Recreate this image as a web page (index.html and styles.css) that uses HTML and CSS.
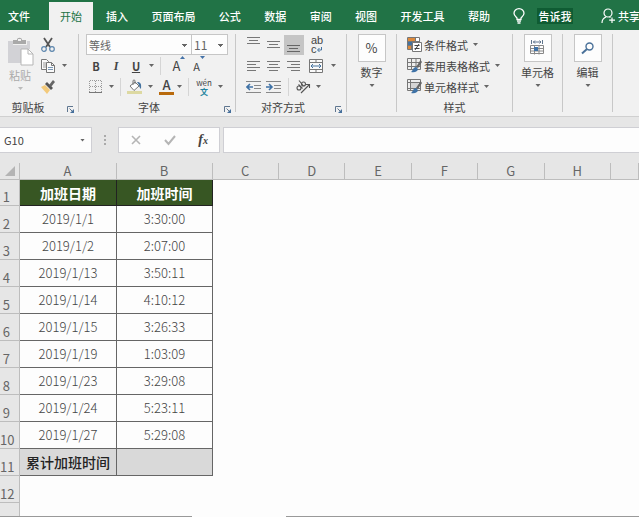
FILE: index.html
```html
<!DOCTYPE html>
<html lang="zh-CN">
<head>
    <meta charset="UTF-8">
    <meta name="viewport" content="width=device-width, initial-scale=1.0">
    <title>加班时间</title>
    <link rel="stylesheet" href="styles.css">
</head>
<body>

    <header class="tab-bar">
        <button class="tab file">文件</button>
        <button class="tab active">开始</button>
        <nav class="tabs">
            <button class="tab">插入</button>
            <button class="tab">页面布局</button>
            <button class="tab">公式</button>
            <button class="tab">数据</button>
            <button class="tab">审阅</button>
            <button class="tab">视图</button>
            <button class="tab">开发工具</button>
            <button class="tab">帮助</button>
        </nav>
        <svg class="bulb" width="12" height="16" viewBox="0 0 12 16" fill="none" stroke="#fff" stroke-width="1.3">
            <path d="M4 11.5V10C2.500 8.500 1 7.500 1 5.300a5 4.600 0 0 1 10 0C11 7.500 9.500 8.500 8 10v1.500zM4 13.200h4M4.500 15h3"/>
        </svg>
        <button class="tell-me">告诉我</button>
        <button class="share">
            <svg width="14" height="16" viewBox="0 0 14 16" fill="none" stroke="#fff" stroke-width="1.200">
                <circle cx="7" cy="5" r="4"/>
                <path d="M1 15c0-3 1.500-5 4-6M8.500 9l1 .6M11 9.500v5.500M8.200 12.200H14"/>
            </svg>
            共享
        </button>
    </header>

    <section class="ribbon">
        <div class="group clipboard">
            <div class="group-body">
                <button class="paste" disabled>
                    <svg width="27" height="30" viewBox="0 0 27 30">
                        <path d="M1 4h5v4h14V4h3v8h-9v14H1z" fill="#d2d2d6"/>
                        <path d="M6 3h4c0-3 5-3 5 0h4v4H6z" fill="#a9a9a9"/>
                        <rect x="11" y="2" width="3" height="2" fill="#f1f1f1"/>
                        <path d="M14 12h7l5 5v11H14z" fill="#fff" stroke="#b5b5b5"/>
                        <path d="M21 12v5h5" fill="none" stroke="#b5b5b5"/>
                    </svg>
                    <span>粘贴</span>
                    <i class="caret"></i>
                </button>
                <div class="tools">
                    <button class="row" aria-label="剪切">
                        <svg width="16" height="16" viewBox="0 0 16 16" fill="none">
                            <path d="M4 1l6 9M12 1L6 10" stroke="#555" stroke-width="1.800"/>
                            <circle cx="4" cy="12" r="2.300" stroke="#5c86ad" stroke-width="1.200"/>
                            <circle cx="12" cy="12" r="2.300" stroke="#5c86ad" stroke-width="1.200"/>
                        </svg>
                    </button>
                    <button class="row" aria-label="复制">
                        <svg width="16" height="16" viewBox="0 0 16 16" fill="#fafafa" stroke="#777">
                            <path d="M1.500 1.500h5l2 2v8h-7z"/>
                            <path d="M3 5h3M3 7h3M3 9h3" stroke="#999"/>
                            <path d="M6.500 4.500h5l3 3v7h-8z"/>
                            <path d="M11.500 4.500v3h3" fill="none"/>
                            <path d="M8 9.500h5M8 11.500h5" stroke="#7896b5"/>
                        </svg>
                        <i class="caret"></i>
                    </button>
                    <button class="row" aria-label="格式刷">
                        <svg width="16" height="16" viewBox="0 0 16 16">
                            <path d="M1 8l4-2 5 5-3 4z" fill="#f3ca7b"/>
                            <path d="M5 5l2-2 6 6-2 2z" fill="#555"/>
                            <path d="M9 6l4-5 2 2-4 5z" fill="#666"/>
                        </svg>
                    </button>
                </div>
            </div>
            <footer class="group-name">剪贴板
                <svg class="launcher" width="7" height="7" viewBox="0 0 7 7"><path d="M.5 6V.5H6M2.500 2.500l3 3" fill="none" stroke="#5f7690"/><path d="M7 3v4H3z" fill="#456f9b"/></svg>
            </footer>
        </div>

        <div class="group font">
            <div class="group-body stacked">
                <div class="row selects">
                    <select class="font-name" aria-label="字体"><option>等线</option></select>
                    <select class="font-size" aria-label="字号"><option>11</option></select>
                </div>
                <div class="row">
                    <button class="icon bold">B</button>
                    <button class="icon italic">I</button>
                    <button class="icon underline">U</button>
                    <i class="caret"></i>
                    <span class="divider"></span>
                    <button class="icon grow">A<svg width="5" height="3" viewBox="0 0 5 3"><path d="M0 3l2.500-3L5 3z" fill="#4472a8"/></svg></button>
                    <button class="icon shrink">A<svg width="5" height="3" viewBox="0 0 5 3"><path d="M0 0h5L2.500 3z" fill="#4472a8"/></svg></button>
                </div>
                <div class="row">
                    <button class="icon" aria-label="边框">
                        <svg width="14" height="14" viewBox="0 0 14 14" stroke="#999" fill="none">
                            <path d="M1 .5h12M1 6.500h12M.5 1v11M6.500 1v11M12.500 1v11" stroke-dasharray="1 1"/>
                            <path d="M0 12.500h13" stroke="#777"/>
                        </svg>
                    </button>
                    <i class="caret"></i>
                    <span class="divider"></span>
                    <button class="icon" aria-label="填充颜色">
                        <svg width="16" height="16" viewBox="0 0 16 16">
                            <path d="M3 7l5-4 4 4-5 4.500z" fill="#fff" stroke="#777"/>
                            <path d="M6 6V2c0-1.500 2-1.500 2 0v3" fill="none" stroke="#777"/>
                            <path d="M10 3c4 0 4.500 2 4 7-1.500-1-2-3-2-4z" fill="#44729f"/>
                            <path d="M0 12h15v3H0z" fill="#ddd9a2"/>
                        </svg>
                    </button>
                    <i class="caret"></i>
                    <button class="icon font-color">A</button>
                    <i class="caret"></i>
                    <span class="divider"></span>
                    <button class="icon phonetic"><span>wén</span><b>文</b></button>
                    <i class="caret"></i>
                </div>
            </div>
            <footer class="group-name">字体
                <svg class="launcher" width="7" height="7" viewBox="0 0 7 7"><path d="M.5 6V.5H6M2.500 2.500l3 3" fill="none" stroke="#5f7690"/><path d="M7 3v4H3z" fill="#456f9b"/></svg>
            </footer>
        </div>

        <div class="group align">
            <div class="group-body stacked">
                <div class="row">
                    <button class="icon" aria-label="顶端对齐"><svg width="14" height="16" viewBox="0 0 14 16" stroke="#777"><path d="M0 .5h13M2 3.500h9M0 6.500h13"/></svg></button>
                    <button class="icon" aria-label="垂直居中"><svg width="14" height="16" viewBox="0 0 14 16" stroke="#777"><path d="M0 4.500h13M2 7.500h9M0 10.500h13"/></svg></button>
                    <button class="icon pressed" aria-label="底端对齐"><svg width="14" height="16" viewBox="0 0 14 16" stroke="#666"><path d="M0 8.500h13M2 11.500h9M0 14.500h13"/></svg></button>
                    <button class="icon wrap"><span>ab</span><span>c<svg width="5" height="5" viewBox="0 0 5 5"><path d="M4.500 0v3H1M2.500 1L.5 3l2 2" fill="none" stroke="#44729f"/></svg></span></button>
                </div>
                <div class="row">
                    <button class="icon" aria-label="左对齐"><svg width="14" height="12" viewBox="0 0 14 12" stroke="#777"><path d="M0 1.500h13M0 4.500h9M0 7.500h13M0 10.500h9"/></svg></button>
                    <button class="icon" aria-label="居中"><svg width="14" height="12" viewBox="0 0 14 12" stroke="#777"><path d="M0 1.500h13M2 4.500h9M0 7.500h13M2 10.500h9"/></svg></button>
                    <button class="icon" aria-label="右对齐"><svg width="14" height="12" viewBox="0 0 14 12" stroke="#777"><path d="M0 1.500h13M4 4.500h9M0 7.500h13M4 10.500h9"/></svg></button>
                    <button class="icon wide" aria-label="合并后居中">
                        <svg width="14" height="14" viewBox="0 0 14 14" fill="#fafafa" stroke="#777">
                            <path d="M.5.5h13v13H.5zM.5 3.500h13M.5 10.500h13M7 .5v3M7 10.500v3"/>
                            <path d="M2 7h10M4 5L2 7l2 2M10 5l2 2-2 2" fill="none" stroke="#44729f"/>
                        </svg>
                    </button>
                    <i class="caret"></i>
                </div>
                <div class="row">
                    <button class="icon" aria-label="减少缩进"><svg width="16" height="12" viewBox="0 0 16 12" stroke="#888"><path d="M0 .5h15M8 4.500h7M8 7.500h7M0 11.500h15"/><path d="M7 6H1M4 3L1 6l3 3" fill="none" stroke="#3f72a6" stroke-width="1.600"/></svg></button>
                    <button class="icon" aria-label="增加缩进"><svg width="16" height="12" viewBox="0 0 16 12" stroke="#888"><path d="M0 .5h15M8 4.500h7M8 7.500h7M0 11.500h15"/><path d="M0 6h6M3 3l3 3-3 3" fill="none" stroke="#3f72a6" stroke-width="1.600"/></svg></button>
                    <span class="divider"></span>
                    <button class="icon" aria-label="方向">
                        <svg width="16" height="16" viewBox="0 0 16 16" fill="none" stroke="#555" stroke-width="1.100">
                            <circle cx="4" cy="9" r="2"/><path d="M3.500 5.500l4 4"/>
                            <circle cx="8.500" cy="5" r="2"/><path d="M4 1.500l4.500 5.500"/>
                            <path d="M6 14l8-8M11 5.500h3.500V9"/>
                        </svg>
                    </button>
                    <i class="caret"></i>
                </div>
            </div>
            <footer class="group-name">对齐方式
                <svg class="launcher" width="7" height="7" viewBox="0 0 7 7"><path d="M.5 6V.5H6M2.500 2.500l3 3" fill="none" stroke="#5f7690"/><path d="M7 3v4H3z" fill="#456f9b"/></svg>
            </footer>
        </div>

        <div class="group single">
            <button class="big">
                <span class="tile">%</span>
                <span>数字</span>
                <i class="caret"></i>
            </button>
        </div>

        <div class="group styles">
            <div class="group-body stacked">
                <button class="row">
                    <svg width="15" height="15" viewBox="0 0 15 15">
                        <path d="M.5.5h12v12H.5zM.5 4.500h12M.5 8.500h12M4.500.5v12M8.500.5v12" fill="#fff" stroke="#777"/>
                        <path d="M1 1h7v3H1zM1 9h3v3H1z" fill="#dd8a3c"/><path d="M1 5h5v3H1z" fill="#44729f"/>
                        <path d="M5.500 5.500h9v9h-9z" fill="#fff" stroke="#777"/>
                        <path d="M7.500 8.500h5M7.500 11.500h5M12 7l-4 6" stroke="#444" fill="none"/>
                    </svg>
                    <span>条件格式</span><i class="caret"></i>
                </button>
                <button class="row">
                    <svg width="15" height="15" viewBox="0 0 15 15">
                        <path d="M.5.5h13v11H.5zM.5 4.500h13M.5 8.500h13M4.500.5v11M9 .5v11" fill="#eee" stroke="#777"/>
                        <path d="M13.500 2L15 4l-4 6-2-1z" fill="#666"/><path d="M4 14c2-1 2-5 5-5l2 2c0 2-3 4-7 3z" fill="#3f72a6"/>
                    </svg>
                    <span>套用表格格式</span><i class="caret"></i>
                </button>
                <button class="row">
                    <svg width="15" height="15" viewBox="0 0 15 15">
                        <path d="M.5.5h13v11H.5zM.5 3.500h13M.5 9.500h13M3.500.5v11" fill="#eee" stroke="#777"/><path d="M4 4h7v5H4z" fill="#d5d5d5"/>
                        <path d="M13.500 2L15 4l-4 6-2-1z" fill="#666"/><path d="M4 14c2-1 2-5 5-5l2 2c0 2-3 4-7 3z" fill="#3f72a6"/>
                    </svg>
                    <span>单元格样式</span><i class="caret"></i>
                </button>
            </div>
            <footer class="group-name">样式</footer>
        </div>

        <div class="group single">
            <button class="big">
                <span class="tile">
                    <svg width="15" height="16" viewBox="0 0 15 16" fill="none">
                        <path d="M1.500 0v4M12.500 0v4M3 2h8M5 .5L3.500 2 5 3.500M9.500.5L11 2 9.500 3.500" stroke="#60758d"/>
                        <path d="M.5 5.500h13v8H.5zM.5 8.500h13M.5 11h13M4.500 5.500v9M9 5.500v9" stroke="#888"/>
                        <path d="M4 7h4v4H4z" fill="#3f72a6"/>
                    </svg>
                </span>
                <span>单元格</span>
                <i class="caret"></i>
            </button>
        </div>

        <div class="group single">
            <button class="big">
                <span class="tile">
                    <svg width="14" height="13" viewBox="0 0 14 13" fill="none" stroke="#4a7199">
                        <circle cx="8.500" cy="4.500" r="3.500" stroke-width="1.400"/><path d="M6 7l-5 4.500" stroke-width="2"/>
                    </svg>
                </span>
                <span>编辑</span>
                <i class="caret"></i>
            </button>
        </div>
    </section>

    <section class="formula-bar">
        <div class="name-box">
            <input type="text" value="G10" aria-label="名称框">
            <i class="caret"></i>
        </div>
        <span class="grip"></span>
        <div class="entry-tools">
            <button aria-label="取消"><svg width="12" height="12" viewBox="0 0 12 12"><path d="M2 2l8 8M10 2l-8 8" stroke="#b5b5b5" stroke-width="1.600"/></svg></button>
            <button aria-label="输入"><svg width="12" height="12" viewBox="0 0 12 12"><path d="M1 6l3.500 4L11 2" fill="none" stroke="#b5b5b5" stroke-width="2"/></svg></button>
            <button class="fx">f<small>x</small></button>
        </div>
        <input class="formula" type="text" aria-label="编辑栏">
    </section>

    <main class="sheet">
        <table>
            <colgroup>
                <col class="col-index"><col class="col-date"><col class="col-time">
                <col><col><col><col><col><col><col class="col-last">
            </colgroup>
            <thead>
                <tr>
                    <th class="corner"><svg width="10" height="10" viewBox="0 0 10 10"><path d="M10 0v10H0z" fill="#b4b4b4"/></svg></th>
                    <th>A</th><th>B</th><th>C</th><th>D</th><th>E</th><th>F</th><th>G</th><th>H</th><th></th>
                </tr>
            </thead>
            <tbody>
                <tr class="title"><th>1</th><td>加班日期</td><td>加班时间</td></tr>
                <tr><th>2</th><td>2019/1/1</td><td>3:30:00</td></tr>
                <tr><th>3</th><td>2019/1/2</td><td>2:07:00</td></tr>
                <tr><th>4</th><td>2019/1/13</td><td>3:50:11</td></tr>
                <tr><th>5</th><td>2019/1/14</td><td>4:10:12</td></tr>
                <tr><th>6</th><td>2019/1/15</td><td>3:26:33</td></tr>
                <tr><th>7</th><td>2019/1/19</td><td>1:03:09</td></tr>
                <tr><th>8</th><td>2019/1/23</td><td>3:29:08</td></tr>
                <tr><th>9</th><td>2019/1/24</td><td>5:23:11</td></tr>
                <tr><th>10</th><td>2019/1/27</td><td>5:29:08</td></tr>
                <tr class="total"><th>11</th><td>累计加班时间</td><td></td></tr>
                <tr><th>12</th></tr>
                <tr><th>13</th></tr>
            </tbody>
        </table>
    </main>
    <div class="bottom-edge"><span></span><span></span></div>

</body>
</html>
```
FILE: styles.css
```css
* {
    box-sizing: border-box;
}
body {
    margin: 0;
    height: 100vh;
    display: flex;
    flex-direction: column;
    overflow: hidden;
    background-color: #fdfdfd;
    font-family: "Noto Sans CJK SC", sans-serif;
    font-size: 11px;
    line-height: 16px;
    color: #444;
}
button, input, select {
    font: inherit;
    color: inherit;
    margin: 0;
    padding: 0;
    border: none;
    background: none;
    border-radius: 0;
}
svg {
    display: block;
    flex: none;
}
.caret {
    flex: none;
    width: 10px;
    height: 3px;
    background-color: #666;
    clip-path: polygon(30% 0, 80% 0, 55% 100%);
}

/* Tab bar */
.tab-bar {
    display: flex;
    align-items: center;
    flex: none;
    height: 30px;
    padding-top: 2px;
    background-color: #217346;
    color: #fff;
    white-space: nowrap;
}
.tab {
    height: 28px;
    font-weight: 500;
}
.tab.file {
    padding: 0 19px 0 8px;
}
.tab.active {
    width: 44px;
    margin-right: 13px;
    background-color: #f1f1f1;
    color: #217346;
    font-weight: 400;
}
.tabs {
    flex: 1;
    display: flex;
    justify-content: space-between;
}
.bulb {
    margin: 0 12px 0 23px;
}
.tell-me {
    width: 36px;
    height: 16px;
    background-color: #0f5c33;
    font-weight: 500;
}
.share {
    display: flex;
    align-items: center;
    gap: 3px;
    margin-left: 28px;
    margin-right: -1px;
    font-weight: 500;
}

/* Ribbon */
.ribbon {
    display: flex;
    flex: none;
    height: 87px;
    padding: 4px 0;
    background-color: #f1f1f1;
    border-bottom: 1px solid #d0d0d0;
}
.group {
    flex: none;
    display: flex;
    flex-direction: column;
    border-right: 1px solid #c8c8c8;
}
.group-body {
    display: flex;
    height: 63px;
}
.group-body.stacked {
    flex-direction: column;
}
.row {
    display: flex;
    align-items: center;
    height: 21px;
}
.group-name {
    position: relative;
    text-align: center;
    line-height: 20px;
    height: 16px;
    padding-right: 16px;
}
.launcher {
    position: absolute;
    right: 4px;
    bottom: 0;
}
.icon {
    display: flex;
    align-items: center;
    justify-content: center;
    flex: none;
    width: 20px;
    height: 20px;
}
.icon.wide {
    width: 24px;
}
.icon.pressed {
    background-color: #c5c5c5;
}
.divider {
    width: 1px;
    height: 18px;
    margin: 0 4px;
    background-color: #d5d5d5;
}

.clipboard {
    width: 79px;
}
.clipboard .group-name {
    padding-right: 22px;
}
.paste {
    display: flex;
    flex-direction: column;
    align-items: center;
    width: 40px;
    padding-top: 3px;
    color: #aaa;
}
.paste .caret {
    margin-top: 4px;
    background-color: #bbb;
}
.tools .row {
    gap: 3px;
}

.font {
    width: 157px;
}
.font .group-body {
    padding-left: 7px;
}
.selects {
    padding-right: 7px;
}
.selects select {
    height: 21px;
    border: 1px solid #c6c6c6;
    background-color: #fdfdfd;
    appearance: none;
    padding-left: 2px;
    color: #666;
    background-image: linear-gradient(#666, #666), linear-gradient(#666, #666), linear-gradient(#666, #666);
    background-repeat: no-repeat;
    background-size: 5px 1px, 3px 1px, 1px 1px;
    background-position: right 4px top 9px, right 5px top 10px, right 6px top 11px;
}
.font-name {
    flex: 1;
}
.selects .font-size {
    width: 37px;
    margin-left: -1px;
    font-size: 12px;
}
.bold {
    font-weight: 700;
}
.italic {
    font-family: "Liberation Serif", serif;
    font-style: italic;
    font-weight: 700;
    font-size: 12px;
}
.underline {
    font-weight: 700;
    text-decoration: underline;
}
.grow, .shrink {
    align-items: flex-start;
    font-size: 13px;
    line-height: 20px;
    padding-left: 8px;
}
.shrink {
    font-size: 11px;
}
.font-color {
    height: 16px;
    width: 15px;
    margin-left: 4px;
    font-size: 13px;
    font-weight: 500;
    border-bottom: 3px solid #b96a0c;
}
.phonetic {
    flex-direction: column;
    font-size: 8px;
    line-height: 9px;
    width: 22px;
}
.phonetic b {
    color: #2585a0;
}

.align {
    width: 111px;
}
.align .group-body {
    padding-left: 8px;
}
.wrap {
    flex-direction: column;
    align-items: flex-start;
    width: 26px;
    padding-left: 7px;
    font-family: "Liberation Sans", sans-serif;
    line-height: 9px;
}
.wrap span {
    display: flex;
    align-items: center;
}

.single {
    width: 50px;
}
.big {
    display: flex;
    flex-direction: column;
    align-items: center;
}
.tile {
    display: flex;
    align-items: center;
    justify-content: center;
    width: 28px;
    height: 28px;
    margin-bottom: 2px;
    border: 1px solid #c6c6c6;
    background-color: #fdfdfd;
    font-size: 13px;
}
.big .caret {
    margin-top: 4px;
}

.styles {
    width: 116px;
}
.styles .group-body {
    padding-left: 10px;
}
.styles .row {
    gap: 2px;
    line-height: 14px;
}
.styles .group-name {
    padding-right: 0;
}

/* Formula bar */
.formula-bar {
    display: flex;
    align-items: center;
    flex: none;
    height: 46px;
    background-color: #e6e6e6;
}
.name-box, .entry-tools, .formula {
    height: 26px;
    border: 1px solid #cfcfd4;
    background-color: #fdfdfd;
}
.name-box {
    display: flex;
    align-items: center;
    width: 92px;
    border-left: none;
    padding: 0 4px;
}
.name-box input {
    flex: 1;
    min-width: 0;
}
.grip {
    width: 2px;
    height: 10px;
    margin: 0 12px;
    background: repeating-linear-gradient(#aaa 0 2px, transparent 2px 4px);
}
.entry-tools {
    display: flex;
    align-items: center;
    justify-content: space-between;
    width: 102px;
    padding: 0 11px;
    margin-right: 3px;
}
.fx {
    font-family: "Liberation Serif", serif;
    font-style: italic;
    font-weight: 700;
    font-size: 14px;
}
.fx small {
    font-size: 10px;
}
.formula {
    flex: 1;
    min-width: 0;
    border-right: none;
}

/* Sheet */
.sheet {
    flex: 1;
    min-height: 0;
    overflow: hidden;
}
.sheet table {
    width: 100%;
    table-layout: fixed;
    border-collapse: collapse;
    font-size: 13px;
    line-height: 16px;
}
.col-index {
    width: 19px;
}
.col-date {
    width: 97px;
}
.col-time {
    width: 96px;
}
.col-last {
    width: 28px;
}
.sheet th {
    padding: 0;
    background-color: #e6e6e6;
    border: 1px solid #bdbdbd;
    border-top: none;
    font-weight: 400;
    color: #666;
}
.sheet thead th {
    height: 16px;
}
.sheet .corner {
    border-left: none;
    padding-left: 5px;
}
.sheet tbody tr {
    height: 27px;
}
.sheet tbody .title {
    height: 26px;
}
.sheet tbody th {
    padding-right: 6px;
    border-left: none;
    vertical-align: bottom;
}
.sheet td {
    padding: 0 0 0 1px;
    border: 1px solid #666;
    text-align: center;
    color: #444;
    font-weight: 300;
}
.sheet .title td {
    background-color: #375623;
    border-color: #222;
    color: #fff;
    font-size: 14px;
    font-weight: 700;
}
.sheet .total td {
    background-color: #d9d9d9;
    color: #222;
    font-size: 14px;
    font-weight: 500;
}

.bottom-edge {
    display: flex;
    flex: none;
    gap: 94px;
    height: 1px;
}
.bottom-edge span {
    width: 192px;
    background-color: #999;
}
.bottom-edge span:last-child {
    flex: 1;
}
```
